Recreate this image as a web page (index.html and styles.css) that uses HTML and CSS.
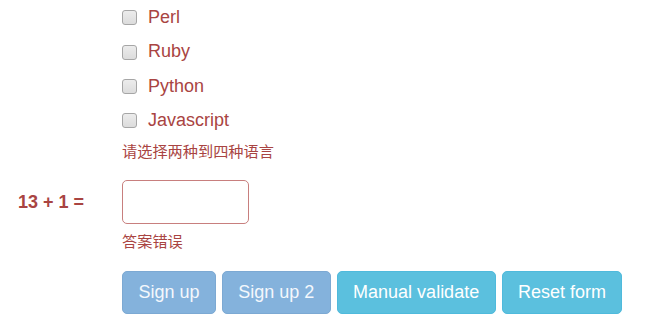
FILE: index.html
```html
<!DOCTYPE html>
<html>
<head>
<meta charset="utf-8">
<link rel="stylesheet" href="styles.css">
</head>
<body>
<form class="form">
  <div class="row">
    <div class="label-col"></div>
    <div class="field-col">
      <div class="checks">
        <label class="check"><span class="box"></span>Perl</label>
        <label class="check"><span class="box"></span>Ruby</label>
        <label class="check"><span class="box"></span>Python</label>
        <label class="check"><span class="box"></span>Javascript</label>
      </div>
      <div class="help help-langs">请选择两种到四种语言</div>
    </div>
  </div>
  <div class="row row-captcha">
    <div class="label-col"><span class="cap-label">13 + 1 =</span></div>
    <div class="field-col">
      <input class="input" type="text">
      <div class="help help-answer">答案错误</div>
    </div>
  </div>
  <div class="row">
    <div class="label-col"></div>
    <div class="field-col buttons">
      <button type="button" class="btn btn-disabled">Sign up</button>
      <button type="button" class="btn btn-disabled">Sign up 2</button>
      <button type="button" class="btn btn-info">Manual validate</button>
      <button type="button" class="btn btn-info">Reset form</button>
    </div>
  </div>
</form>
</body>
</html>
```

FILE: styles.css
```css
html, body {
  margin: 0;
  padding: 0;
  background: #fff;
}
body {
  width: 660px;
  height: 330px;
  overflow: hidden;
  font-family: "Liberation Sans", Arial, "Noto Sans CJK SC", sans-serif;
  font-size: 18px;
  color: #a94442;
}
.form {
  padding-top: 5px;
}
.row {
  display: flex;
}
.label-col {
  width: 122px;
  flex: none;
  box-sizing: border-box;
  padding-left: 18px;
}
.field-col {
  display: flex;
  flex-direction: column;
}
.checks {
  display: flex;
  flex-direction: column;
  gap: 8.6px;
}
.check {
  display: flex;
  align-items: center;
  height: 25.7px;
  line-height: 25.7px;
}
.box {
  display: inline-block;
  width: 13px;
  height: 13px;
  border: 1px solid #a6a6a6;
  border-radius: 3px;
  background: linear-gradient(#ececec, #dcdcdc);
  margin-right: 11px;
  box-sizing: content-box;
}
.help {
  font-family: "Noto Sans CJK SC", sans-serif;
  font-size: 15.2px;
  line-height: 21px;
  color: #a94442;
}
.help-langs {
  margin-top: 6px;
}
.row-captcha {
  margin-top: 19.5px;
}
.row-captcha .label-col {
  height: 44px;
  display: flex;
  align-items: center;
}
.cap-label {
  font-weight: bold;
  font-size: 18px;
}
.input {
  width: 127px;
  height: 44px;
  box-sizing: border-box;
  border: 1.3px solid #c87f7e;
  border-radius: 5px;
  margin: 0;
  padding: 0 15px;
  font-size: 18px;
  background: #fff;
  outline: none;
}
.help-answer {
  margin-top: 5.5px;
}
.buttons {
  flex-direction: row;
  gap: 6px;
  margin-top: 20.5px;
}
.btn {
  height: 43px;
  box-sizing: border-box;
  padding: 0 15.4px;
  border: 1.3px solid transparent;
  border-radius: 5px;
  font-family: "Liberation Sans", Arial, sans-serif;
  font-size: 18px;
  color: #fff;
  line-height: 25.7px;
  margin: 0;
}
.btn-disabled {
  background: #84b2dc;
  border-color: #7ca9d3;
  color: #f4f8fc;
}
.btn-info {
  background: #5bc0de;
  border-color: #4fbadc;
}
```
